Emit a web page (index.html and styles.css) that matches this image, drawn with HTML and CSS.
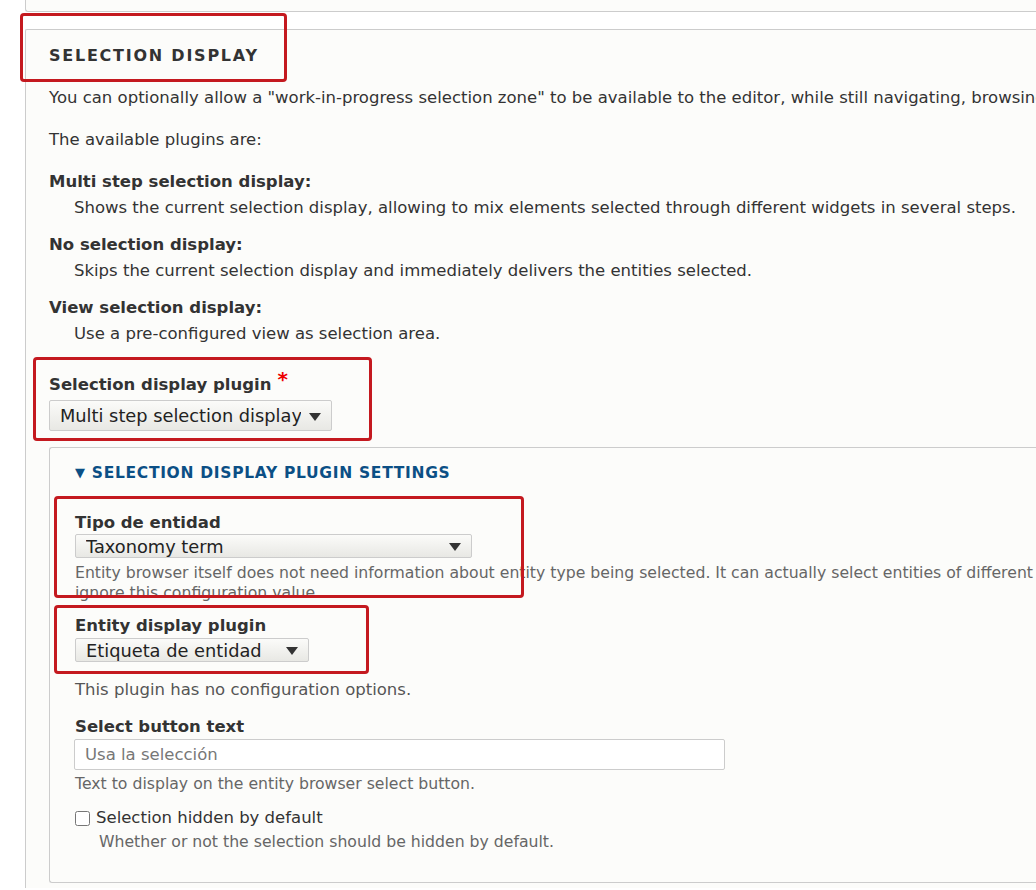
FILE: index.html
```html
<!DOCTYPE html>
<html lang="en">
<head>
    <meta charset="UTF-8">
    <title>Selection display</title>
    <link rel="stylesheet" href="styles.css">
</head>
<body>
    <div class="page">

        <div class="prev-fieldset"></div>

        <!-- Selection display fieldset -->
        <fieldset class="fieldset">
            <div class="legend">Selection display</div>
            <p class="intro">You can optionally allow a "work-in-progress selection zone" to be available to the editor, while still navigating, browsing the different widgets and making selections.</p>
            <p class="intro">The available plugins are:</p>

            <dl class="plugins">
                <dt>Multi step selection display:</dt>
                <dd>Shows the current selection display, allowing to mix elements selected through different widgets in several steps.</dd>
                <dt>No selection display:</dt>
                <dd>Skips the current selection display and immediately delivers the entities selected.</dd>
                <dt>View selection display:</dt>
                <dd>Use a pre-configured view as selection area.</dd>
            </dl>

            <div class="form-item form-item-plugin">
                <label class="label">Selection display plugin<span class="required">*</span></label>
                <div class="select-wrap select-plugin">
                    <select>
                        <option>Multi step selection display</option>
                        <option>No selection display</option>
                        <option>View selection display</option>
                    </select>
                </div>
            </div>

            <!-- Plugin settings -->
            <div class="details">
                <div class="summary"><span class="caret">&#9660;</span> Selection display plugin settings</div>

                <div class="form-item">
                    <label class="label">Tipo de entidad</label>
                    <div class="select-wrap select-type">
                        <select>
                            <option>Taxonomy term</option>
                        </select>
                    </div>
                    <div class="description">Entity browser itself does not need information about entity type being selected. It can actually select entities of different type and some displays could<br>ignore this configuration value.</div>
                </div>

                <div class="form-item form-item-display">
                    <label class="label">Entity display plugin</label>
                    <div class="select-wrap select-display">
                        <select>
                            <option>Etiqueta de entidad</option>
                        </select>
                    </div>
                </div>
                <p class="note">This plugin has no configuration options.</p>

                <div class="form-item form-item-text">
                    <label class="label">Select button text</label>
                    <input type="text" class="text-input" placeholder="Usa la selección">
                    <div class="description">Text to display on the entity browser select button.</div>
                </div>

                <div class="form-item form-item-check">
                    <label class="check-label"><input type="checkbox" class="checkbox"> Selection hidden by default</label>
                    <div class="description indent">Whether or not the selection should be hidden by default.</div>
                </div>
            </div>
        </fieldset>

        <!-- Red annotation boxes -->
        <div class="mark mark-legend"></div>
        <div class="mark mark-plugin"></div>
        <div class="mark mark-type"></div>
        <div class="mark mark-display"></div>
    </div>
</body>
</html>
```

FILE: styles.css
```css
html, body {
    margin: 0;
    overflow: hidden;
    background-color: #fff;
}

body {
    font-family: "DejaVu Sans", sans-serif;
    font-size: 16.5px;
    line-height: 22px;
    color: #333;
}

.page {
    position: relative;
    width: 1600px;
    height: 890px;
}

.prev-fieldset {
    margin-left: 25px;
    margin-top: -2px;
    height: 12px;
    border: 1px solid #ccc;
    border-right: none;
    border-radius: 0 0 0 3px;
    background-color: #fcfcfa;
}

.fieldset {
    margin: 17px 0 0 25px;
    padding: 16px 0 0 23px;
    min-width: 0;
    height: 900px;
    border: 1px solid #ccc;
    border-right: none;
    border-bottom: none;
    border-radius: 2px 0 0 0;
    background-color: #fcfcfa;
    box-sizing: border-box;
}

.legend {
    font-size: 16px;
    line-height: 20px;
    font-weight: bold;
    letter-spacing: 0.11em;
    text-transform: uppercase;
    color: #333;
}

.intro {
    margin: 21px 0 0;
    white-space: nowrap;
}

.intro + .intro {
    margin-top: 20px;
}

.plugins {
    margin: 20px 0 0;
}

.plugins dt {
    font-weight: bold;
    margin-top: 15px;
}

.plugins dt:first-child {
    margin-top: 0;
}

.plugins dd {
    margin: 4px 0 0 25px;
}

.label {
    display: block;
    font-weight: bold;
}

.required {
    color: #e00;
    margin-left: 6px;
    font-size: 20px;
    line-height: 0;
    vertical-align: 4px;
}

.form-item-plugin {
    margin-top: 29px;
}

.form-item-plugin .label {
    margin-bottom: 4px;
}

.select-wrap {
    position: relative;
    display: inline-block;
    vertical-align: top;
}

.select-wrap select {
    -webkit-appearance: none;
    appearance: none;
    display: block;
    box-sizing: border-box;
    height: 24px;
    margin: 0;
    padding: 0 30px 0 10px;
    font-family: "DejaVu Sans", sans-serif;
    font-size: 17.8px;
    color: #222;
    border: 1px solid #ccc;
    border-radius: 2px;
    background: linear-gradient(#fbfbf9, #e8e8e4);
    outline: none;
}

.select-wrap::after {
    content: "";
    position: absolute;
    right: 11px;
    top: 50%;
    margin-top: -3px;
    border-left: 6px solid transparent;
    border-right: 6px solid transparent;
    border-top: 8px solid #333;
}

.select-plugin select {
    width: 283px;
    height: 31px;
}

.select-type select {
    width: 397px;
}

.select-display select {
    width: 234px;
}

/* Plugin settings box */
.details {
    margin-top: 16px;
    padding: 14px 0 30px 25px;
    border: 1px solid #ccc;
    border-right: none;
    border-radius: 3px 0 0 3px;
    background-color: #fcfcfa;
}

.summary {
    font-size: 15.5px;
    font-weight: bold;
    letter-spacing: 0.045em;
    text-transform: uppercase;
    color: #0b4f85;
}

.caret {
    font-size: 13px;
    position: relative;
    top: -1px;
}

.details .form-item {
    margin-top: 27px;
}

.details .form-item .label {
    margin-bottom: 0;
}

.description {
    margin-top: 5px;
    font-size: 15.7px;
    line-height: 20px;
    color: #666;
    white-space: nowrap;
}

.details .form-item-display {
    margin-top: 12px;
}

.form-item-display .label {
    padding-bottom: 1px;
}

.note {
    margin: 17px 0 0;
    color: #555;
}

.details .form-item-text {
    margin-top: 15px;
}

.text-input {
    display: block;
    box-sizing: border-box;
    width: 651px;
    height: 31px;
    margin: 1px 0 0 -1px;
    padding: 0 10px;
    font-family: "DejaVu Sans", sans-serif;
    font-size: 16.5px;
    border: 1px solid #ccc;
    border-radius: 2px;
    background-color: #fff;
}

.text-input::placeholder {
    color: #777;
}

.form-item-text .description {
    margin-top: 4px;
}

.details .form-item-check {
    margin-top: 13px;
}

.check-label {
    display: flex;
    align-items: center;
    gap: 6px;
    font-size: 16.5px;
    color: #333;
}

.checkbox {
    margin: 0;
    width: 15px;
    height: 15px;
}

.description.indent {
    padding-left: 24px;
    margin-top: 3px;
}

/* Red annotation boxes drawn over the form */
.mark {
    position: absolute;
    border: 3px solid #c4191f;
    border-radius: 4px;
    box-sizing: border-box;
}

.mark-legend {
    left: 20px;
    top: 15px;
    width: 267px;
    height: 69px;
}

.mark-plugin {
    left: 33px;
    top: 359px;
    width: 339px;
    height: 84px;
}

.mark-type {
    left: 54px;
    top: 498px;
    width: 470px;
    height: 102px;
}

.mark-display {
    left: 54px;
    top: 607px;
    width: 315px;
    height: 69px;
}
```
